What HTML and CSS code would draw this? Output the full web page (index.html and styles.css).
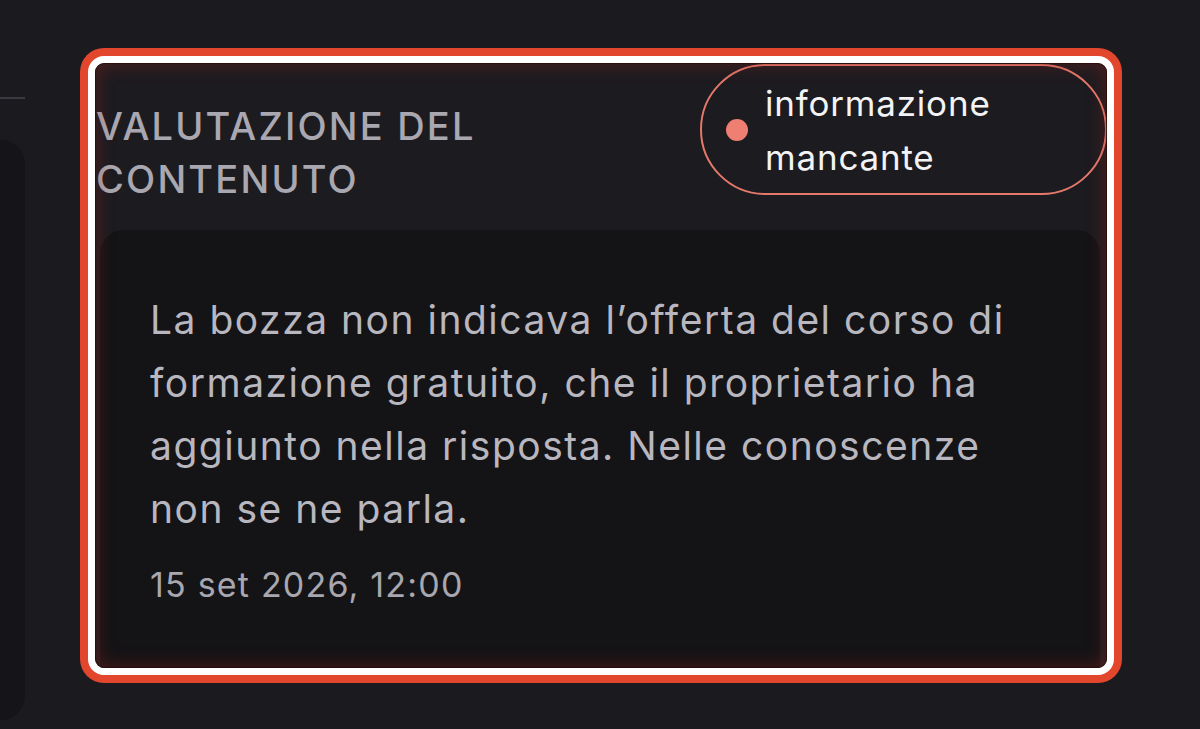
FILE: index.html
```html
<!DOCTYPE html>
<html lang="it">
<head>
<meta charset="utf-8">
<title>Valutazione del contenuto</title>
<link rel="stylesheet" href="styles.css">
</head>
<body>
<div class="page">
  <aside class="side">
    <div class="rule"></div>
    <div class="panel"></div>
  </aside>
  <main class="main">
    <section class="card">
      <header class="head">
        <h2 class="title">Valutazione del contenuto</h2>
        <span class="badge"><span class="dot"></span><span class="badge-text">informazione mancante</span></span>
      </header>
      <div class="body">
        <p class="text">La bozza non indicava l’offerta del corso di formazione gratuito, che il proprietario ha aggiunto nella risposta. Nelle conoscenze non se ne parla.</p>
        <p class="date">15 set 2026, 12:00</p>
      </div>
    </section>
  </main>
</div>
</body>
</html>
```

FILE: styles.css
```css
* { box-sizing: border-box; }
html, body { margin: 0; padding: 0; }
body {
  background: #1b1a1f;
  font-family: Inter, "Noto Sans", "Liberation Sans", sans-serif;
  width: 1200px;
  height: 729px;
  overflow: hidden;
}
.page {
  display: flex;
  height: 729px;
}
.side {
  width: 25px;
  flex: none;
  display: flex;
  flex-direction: column;
}
.rule {
  margin-top: 97px;
  height: 2px;
  background: #3a393f;
}
.panel {
  margin-top: 41px;
  height: 580px;
  background: #151418;
  border-radius: 0 24px 24px 0;
}
.main {
  flex: 1;
  padding: 56px 0 0 63px;
}
.card {
  position: relative;
  width: 1026px;
  height: 619px;
  border: 7px solid #ffffff;
  border-radius: 16px;
  box-shadow: 0 0 0 8px #e2462c;
  background: #1c1b20;
  overflow: hidden;
  display: flex;
  flex-direction: column;
}
.card::after {
  content: "";
  position: absolute;
  inset: 0;
  border-radius: 9px;
  box-shadow: inset 0 0 1px 1px rgba(40, 12, 10, 0.9), inset 0 0 20px rgba(170, 40, 28, 0.42);
  pointer-events: none;
}
.head {
  display: flex;
  justify-content: space-between;
  align-items: flex-start;
  flex: none;
}
.title {
  margin: 37px 0 0 1px;
  width: 520px;
  font-size: 38px;
  line-height: 53px;
  font-weight: 500;
  letter-spacing: 2.2px;
  text-transform: uppercase;
  color: #a9a7b0;
}
.badge {
  margin-top: 1px;
  width: 407px;
  height: 131px;
  border: 2px solid #e3786b;
  border-radius: 66px;
  display: flex;
  align-items: center;
  padding: 0 20px 0 24px;
  gap: 17px;
}
.dot {
  width: 22px;
  height: 22px;
  border-radius: 50%;
  background: #ef7f72;
  flex: none;
}
.badge-text {
  font-size: 35px;
  line-height: 54px;
  letter-spacing: 0.8px;
  color: #f3f3f5;
  width: 250px;
}
.body {
  margin: 24px 7px 0 5px;
  flex: none;
  height: 470px;
  background: #141316;
  border-radius: 24px;
  padding: 58px 60px 0 50px;
}
.text {
  margin: 0;
  font-size: 39px;
  line-height: 63px;
  letter-spacing: 1.5px;
  color: #b8b7bf;
}
.date {
  margin: 18px 0 0;
  font-size: 34px;
  line-height: 54px;
  letter-spacing: 1.2px;
  color: #a8a7af;
}
```
